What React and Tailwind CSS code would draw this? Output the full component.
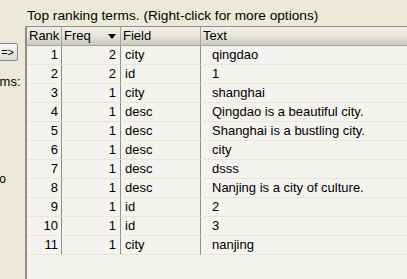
const rows = [
  [1, 2, 'city', 'qingdao'],
  [2, 2, 'id', '1'],
  [3, 1, 'city', 'shanghai'],
  [4, 1, 'desc', 'Qingdao is a beautiful city.'],
  [5, 1, 'desc', 'Shanghai is a bustling city.'],
  [6, 1, 'desc', 'city'],
  [7, 1, 'desc', 'dsss'],
  [8, 1, 'desc', 'Nanjing is a city of culture.'],
  [9, 1, 'id', '2'],
  [10, 1, 'id', '3'],
  [11, 1, 'city', 'nanjing'],
]

const HeadCell = ({ w, children, className = '' }) => (
  <div
    className={`h-[18px] shrink-0 border-r border-[#a7a69a] pl-[2px] leading-[18px] flex items-center ${w} ${className}`}
  >
    {children}
  </div>
)

export default function App() {
  return (
    <div className="w-[407px] h-[279px] overflow-hidden bg-[#ece9d8] text-[13px] text-black flex" style={{ fontFamily: '"Liberation Sans", Arial, sans-serif' }}>
      {/* left panel, mostly scrolled out of view */}
      <div className="w-[25px] shrink-0 relative">
        <div className="absolute left-[-20px] top-[43px] w-[38px] h-[18px] border border-[#7b8597] rounded-[2px] bg-gradient-to-b from-[#fafaf7] to-[#dcdad0] text-[11px] leading-[16px] text-right pr-[3px]">=&gt;</div>
        <div className="absolute left-[-12px] top-[74px] leading-[16px] whitespace-nowrap">erms:</div>
        <div className="absolute left-[-4px] top-[172px] text-[12px] leading-[14px] whitespace-nowrap">to</div>
      </div>
      <div className="flex-1 flex flex-col">
        <div className="h-[26px] pl-[2px] pt-[8px] leading-[16px] text-[13.7px] whitespace-nowrap">Top ranking terms. (Right-click for more options)</div>
        <div className="flex-1 border-l-2 border-t border-[#8e8f8a] bg-[#f4f3ef]">
          <div className="flex border-b border-[#a7a69a] bg-gradient-to-b from-[#f0efe8] via-[#e8e6dc] to-[#c9c8bc]">
            <HeadCell w="w-[35px]">Rank</HeadCell>
            <HeadCell w="w-[59px]" className="justify-between pr-[4px]">
              <span>Freq</span>
              <svg width="8" height="5" viewBox="0 0 8 5"><path d="M0 0H8L4 5Z" fill="#000" /></svg>
            </HeadCell>
            <HeadCell w="w-[80px]">Field</HeadCell>
            <div className="flex-1 h-[18px] pl-[2px] leading-[18px]">Text</div>
          </div>
          {rows.map(([rank, freq, field, text]) => (
            <div key={rank} className="flex h-[19px] leading-[18px]">
              <div className="w-[35px] shrink-0 border-r border-[#8e8f8a] border-b border-b-[#ebe6d0] text-right pr-[3px]">{rank}</div>
              <div className="w-[59px] shrink-0 border-r border-[#8e8f8a] border-b border-b-[#ebe6d0] text-right pr-[4px]">{freq}</div>
              <div className="w-[80px] shrink-0 border-r border-[#8e8f8a] border-b border-b-[#ebe6d0] pl-[4px]">{field}</div>
              <div className="flex-1 border-b border-[#ebe6d0] pl-[11px] whitespace-nowrap">{text}</div>
            </div>
          ))}
        </div>
      </div>
    </div>
  )
}
